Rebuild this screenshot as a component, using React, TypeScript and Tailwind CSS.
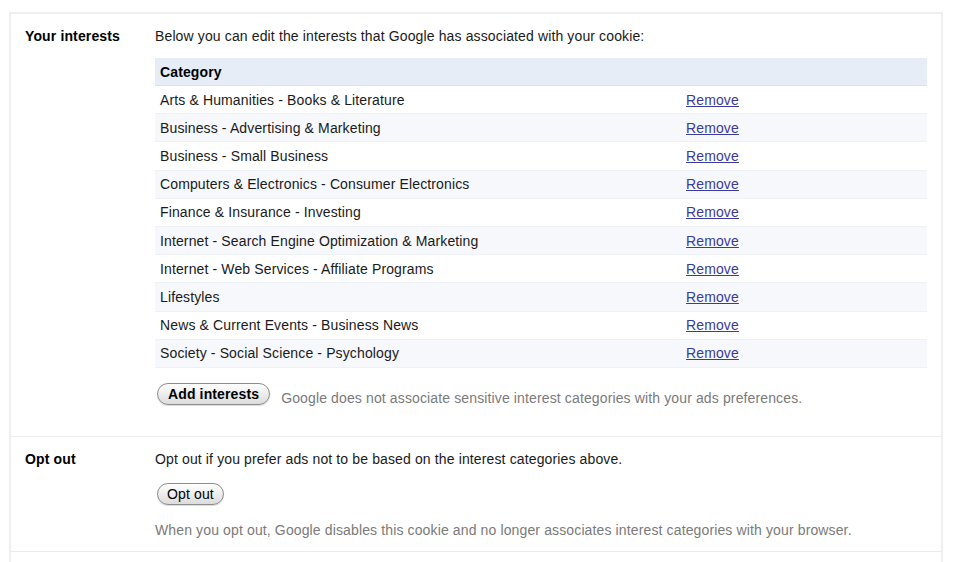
const interests = [
  "Arts & Humanities - Books & Literature",
  "Business - Advertising & Marketing",
  "Business - Small Business",
  "Computers & Electronics - Consumer Electronics",
  "Finance & Insurance - Investing",
  "Internet - Search Engine Optimization & Marketing",
  "Internet - Web Services - Affiliate Programs",
  "Lifestyles",
  "News & Current Events - Business News",
  "Society - Social Science - Psychology",
];

function PillButton({ children, bold }: { children: React.ReactNode; bold?: boolean }) {
  return (
    <button
      className={
        "flex h-[22px] items-center rounded-full border border-[#8d8d8d] bg-gradient-to-b from-white to-[#dcdcdc] text-[14px] leading-none text-black shadow-[0_1px_1px_rgba(0,0,0,0.15)] " +
        (bold ? "px-[10px] font-bold" : "px-[9px] font-normal")
      }
    >
      {children}
    </button>
  );
}

export default function App() {
  return (
    <div className="h-[562px] overflow-hidden bg-white font-['Liberation_Sans',Arial,sans-serif] text-[14px] leading-[16px] tracking-[0.13px] text-[#1a1a1a]">
      <div className="ml-[9px] w-[934px] pt-[12px]">
        <div className="border-x-2 border-t-2 border-[#efefef]">
          {/* Your interests */}
          <section className="flex border-b border-[#ebebeb] pb-[30px] pl-[14px] pr-[14px] pt-[14px]">
            <div className="w-[130px] shrink-0 font-bold text-black">Your interests</div>
            <div className="flex-1">
              <p>Below you can edit the interests that Google has associated with your cookie:</p>
              <div className="mt-[14px]">
                <div className="flex h-[28px] items-center border-b border-[#dce3ec] bg-[#e6edf7] px-[5px] font-bold text-black">
                  Category
                </div>
                {interests.map((name, i) => (
                  <div
                    key={name}
                    className={
                      "flex h-[28.2px] items-center border-b border-[#eef1f6] " +
                      (i % 2 === 1 ? "bg-[#f6f8fc]" : "bg-white")
                    }
                  >
                    <div className="w-[526px] px-[5px]">{name}</div>
                    <a href="#" className="px-[5px] text-[#3b3b98] underline">
                      Remove
                    </a>
                  </div>
                ))}
              </div>
              <div className="mt-[15px] flex items-center gap-[11px] pl-[2px]">
                <PillButton bold>Add interests</PillButton>
                <span className="mt-[7px] text-[#7a7a7a]">
                  Google does not associate sensitive interest categories with your ads preferences.
                </span>
              </div>
            </div>
          </section>

          {/* Opt out */}
          <section className="flex border-b border-[#ebebeb] pb-[13px] pl-[14px] pr-[14px] pt-[14px]">
            <div className="w-[130px] shrink-0 font-bold text-black">Opt out</div>
            <div className="flex-1">
              <p>Opt out if you prefer ads not to be based on the interest categories above.</p>
              <div className="mt-[16px] pl-[2px]">
                <PillButton>Opt out</PillButton>
              </div>
              <p className="mt-[17px] text-[#7a7a7a]">
                When you opt out, Google disables this cookie and no longer associates interest categories with your browser.
              </p>
            </div>
          </section>

          <section className="h-[12px]" />
        </div>
      </div>
    </div>
  );
}
